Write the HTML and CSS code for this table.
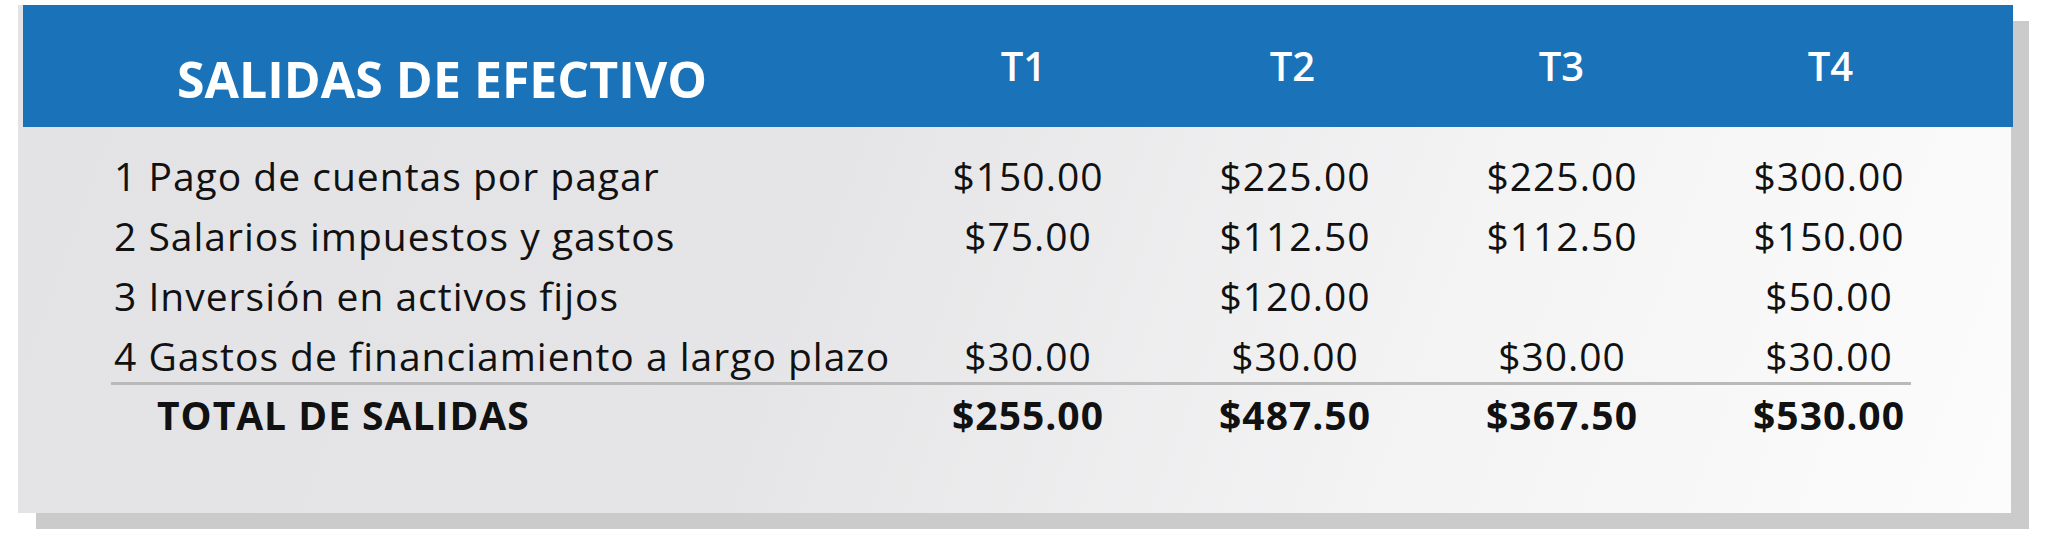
FILE: index.html
```html
<!DOCTYPE html>
<html lang="es">
<head>
<meta charset="utf-8">
<title>Salidas de efectivo</title>
<link rel="stylesheet" href="styles.css">
</head>
<body>
<div class="card">
  <div class="head">
    <div class="title">SALIDAS DE EFECTIVO</div>
    <div class="q">T1</div>
    <div class="q">T2</div>
    <div class="q">T3</div>
    <div class="q">T4</div>
  </div>
  <div class="body">
    <div class="row">
      <div class="label">1 Pago de cuentas por pagar</div>
      <div class="val">$150.00</div>
      <div class="val">$225.00</div>
      <div class="val">$225.00</div>
      <div class="val">$300.00</div>
    </div>
    <div class="row">
      <div class="label">2 Salarios impuestos y gastos</div>
      <div class="val">$75.00</div>
      <div class="val">$112.50</div>
      <div class="val">$112.50</div>
      <div class="val">$150.00</div>
    </div>
    <div class="row">
      <div class="label">3 Inversión en activos fijos</div>
      <div class="val"></div>
      <div class="val">$120.00</div>
      <div class="val"></div>
      <div class="val">$50.00</div>
    </div>
    <div class="row row-last">
      <div class="label">4 Gastos de financiamiento a largo plazo</div>
      <div class="val">$30.00</div>
      <div class="val">$30.00</div>
      <div class="val">$30.00</div>
      <div class="val">$30.00</div>
    </div>
    <div class="divider"></div>
    <div class="row total">
      <div class="label">TOTAL DE SALIDAS</div>
      <div class="val">$255.00</div>
      <div class="val">$487.50</div>
      <div class="val">$367.50</div>
      <div class="val">$530.00</div>
    </div>
  </div>
</div>
</body>
</html>
```

FILE: styles.css
```css
html, body {
  margin: 0;
  padding: 0;
  background: #ffffff;
}
html {
  min-height: 556px;
}
body {
  min-height: 556px;
  box-sizing: border-box;
  padding: 5px 0 0 18px;
  font-family: "Open Sans", "Liberation Sans", sans-serif;
  color: #111111;
}
.card {
  width: 1993px;
  background: linear-gradient(110deg, #e3e3e5 0%, #e5e5e7 40%, #f3f3f4 70%, #fcfcfc 100%);
  box-shadow: 18px 16px 0 #cbcbcb;
}
.head {
  margin-left: 5px;
  margin-right: -2px;
  height: 122px;
  background: #1a72b9;
  display: grid;
  grid-template-columns: 866px repeat(4, 269px);
  align-items: center;
  color: #ffffff;
}
.title {
  padding-left: 154px;
  padding-top: 26px;
  font-size: 50px;
  font-weight: 700;
  line-height: 60px;
}
.q {
  text-align: center;
  font-size: 40px;
  font-weight: 600;
  line-height: 50px;
}
.body {
  padding: 19px 0 70px 93px;
}
.row {
  display: grid;
  grid-template-columns: 783.5px repeat(4, 267px);
  height: 60px;
  align-items: center;
  font-size: 39px;
  letter-spacing: 1px;
  line-height: 60px;
}
.row-last {
  height: 56px;
}
.label {
  padding-left: 3px;
  white-space: nowrap;
}
.val {
  text-align: center;
  white-space: nowrap;
}
.divider {
  width: 1800px;
  height: 3px;
  background: #b9b9b9;
}
.total {
  font-weight: 700;
  height: 58px;
}
.total .label {
  padding-left: 46px;
}
```
